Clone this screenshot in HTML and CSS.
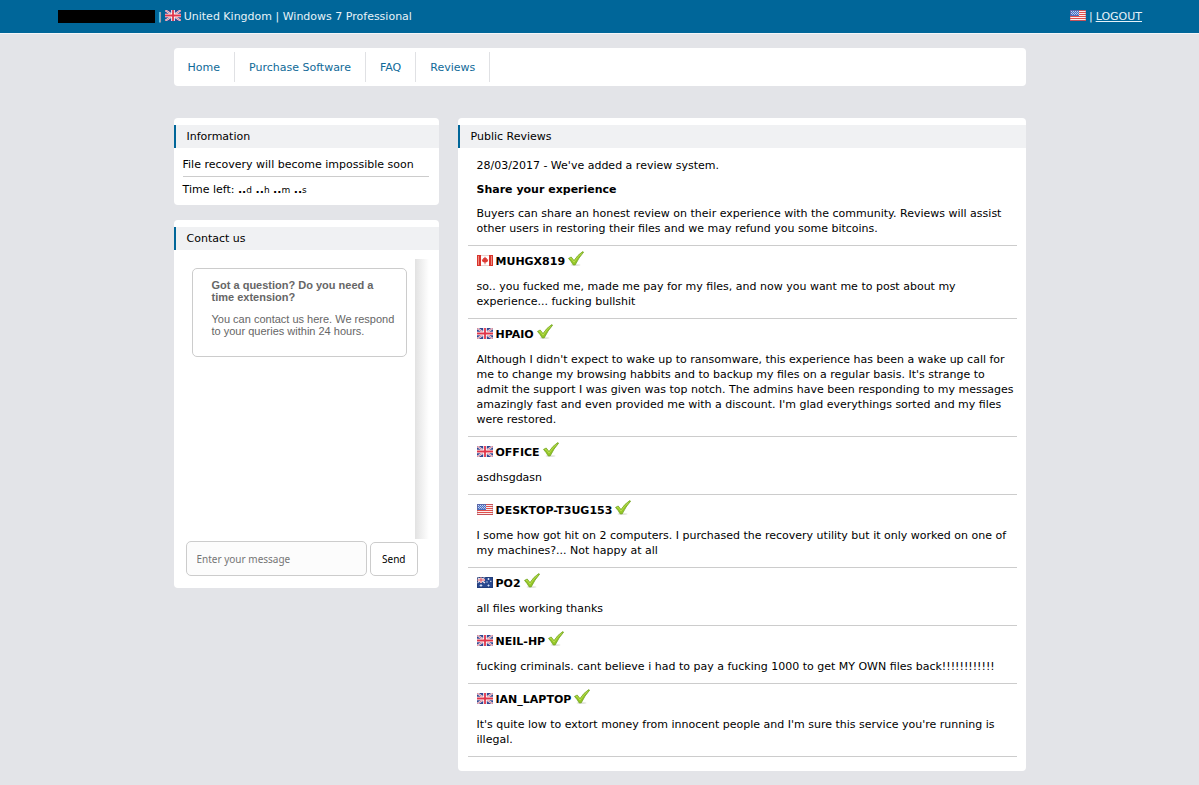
FILE: index.html
```html
<!DOCTYPE html>
<html lang="en">
<head>
<meta charset="utf-8">
<meta name="viewport" content="width=device-width, initial-scale=1">
<title>Public Reviews</title>
<link rel="stylesheet" href="styles.css">
</head>
<body>
<svg class="sprite" aria-hidden="true">
  <symbol id="flag-gb" viewBox="0 0 16 11">
    <rect width="16" height="11" fill="#34458f"/>
    <path d="M0 0L16 11M16 0L0 11" stroke="#efebf3" stroke-width="2"/>
    <path d="M0 0L16 11M16 0L0 11" stroke="#d8606e" stroke-width="0.8"/>
    <path d="M8 0V11M0 5.5H16" stroke="#fff" stroke-width="3.6"/>
    <path d="M8 0V11M0 5.5H16" stroke="#e0354a" stroke-width="1.8"/>
  </symbol>
  <symbol id="flag-us" viewBox="0 0 16 11">
    <rect width="16" height="11" fill="#fbeeee"/>
    <path d="M0 .5H16M0 2.5H16M0 4.5H16M0 6.5H16M0 8.5H16M0 10.5H16" stroke="#e0504c"/>
    <rect width="9" height="6" fill="#4a6fc0"/>
    <path d="M1 1.5H9M1 3.5H9" stroke="#c5d4f2" stroke-dasharray="1 1"/>
    <path d="M2 2.5H9M2 4.5H9" stroke="#a5bae6" stroke-dasharray="1 1"/>
    <rect x="0.5" y="0.5" width="15" height="10" fill="none" stroke="#8a5a78" stroke-opacity="0.3"/>
  </symbol>
  <symbol id="flag-ca" viewBox="0 0 16 11">
    <rect width="16" height="11" fill="#fff"/>
    <path d="M0 0H4V11H0zM12 0H16V11H12z" fill="#d8342c"/>
    <path d="M1.5 1V10M14.5 1V10" stroke="#f08a80"/>
    <path d="M8 1.5L9 3.3L10 3L9.8 4.6L11.3 4.2L10.8 5.6L11.3 6L9 7.6H8.4V9.3H7.6V7.6H7L4.7 6L5.2 5.6L4.7 4.2L6.2 4.6L6 3L7 3.3z" fill="#dc3a34"/>
    <path d="M4 .5H12M4 10.5H12" stroke="#ead4d2"/>
  </symbol>
  <symbol id="flag-au" viewBox="0 0 16 11">
    <rect width="16" height="11" fill="#29488f"/>
    <path d="M0 0L8 6M8 0L0 6" stroke="#e8e3ef" stroke-width="1.4"/>
    <path d="M4 0V6M0 3H8" stroke="#fff" stroke-width="2"/>
    <path d="M4 0V6M0 3H8" stroke="#d94a58"/>
    <path d="M4 7.2V9.8M2.7 8.5H5.3M11.5 1V3M10.5 2H12.5M9.3 5H10.7M13 4.3H14.5M11.5 7.5V9.5M10.5 8.5H12.5" stroke="#d5dff3"/>
    <rect x="0.5" y="0.5" width="15" height="10" fill="none" stroke="#1b3268" stroke-opacity="0.5"/>
  </symbol>
  <symbol id="tick" viewBox="0 0 16 16">
    <ellipse cx="7.5" cy="14" rx="5" ry="0.8" fill="#d8dcd2"/>
    <path d="M0.5 7.4L3.2 6L6 9.6Q9.5 4 14.800 0.500L15.600 1.200Q10.800 6.500 7.200 13.900H5.200Q3.300 10.400 0.500 7.400z" fill="#93c626" stroke="#76a62a" stroke-width="0.8" stroke-linejoin="round"/>
    <path d="M2 7.600L3 7.200L6 11.200Q9.500 5.600 13.500 2.300" fill="none" stroke="#bce050" stroke-width="0.9"/>
  </symbol>
</svg>

<header class="topbar">
  <div class="topbar-group">
    <span class="redacted"></span>
    <span>|</span>
    <svg class="flag" role="img" aria-label="United Kingdom"><use href="#flag-gb"/></svg>
    <span>United Kingdom | Windows 7 Professional</span>
  </div>
  <div class="topbar-group">
    <svg class="flag" role="img" aria-label="English"><use href="#flag-us"/></svg>
    <span>|</span>
    <a class="logout" href="#">LOGOUT</a>
  </div>
</header>

<div class="page">
  <nav class="nav">
    <a class="nav-link" href="#">Home</a>
    <a class="nav-link" href="#">Purchase Software</a>
    <a class="nav-link" href="#">FAQ</a>
    <a class="nav-link" href="#">Reviews</a>
  </nav>

  <div class="columns">
    <aside class="sidebar">
      <section class="panel">
        <h2 class="panel-title">Information</h2>
        <div class="info">
          <p class="info-row">File recovery will become impossible soon</p>
          <p class="info-row">Time left: <b>..</b><small>d</small> <b>..</b><small>h</small> <b>..</b><small>m</small> <b>..</b><small>s</small></p>
        </div>
      </section>

      <section class="panel">
        <h2 class="panel-title">Contact us</h2>
        <div class="chat">
          <div class="chat-log">
            <div class="chat-note">
              <p><strong>Got a question? Do you need a time extension?</strong></p>
              <p>You can contact us here. We respond to your queries within 24 hours.</p>
            </div>
          </div>
          <div class="chat-edge"></div>
        </div>
        <form class="chat-form">
          <input class="chat-input" type="text" placeholder="Enter your message" aria-label="Enter your message">
          <button class="chat-send" type="button">Send</button>
        </form>
      </section>
    </aside>

    <main class="panel reviews">
      <h2 class="panel-title">Public Reviews</h2>
      <div class="review-list">
        <div class="intro">
          <p>28/03/2017 - We've added a review system.</p>
          <p><strong>Share your experience</strong></p>
          <p>Buyers can share an honest review on their experience with the community. Reviews will assist other users in restoring their files and we may refund you some bitcoins.</p>
        </div>
        <article class="review">
          <h3 class="review-name"><svg class="flag"><use href="#flag-ca"/></svg><span>MUHGX819</span><svg class="tick"><use href="#tick"/></svg></h3>
          <p>so.. you fucked me, made me pay for my files, and now you want me to post about my experience... fucking bullshit</p>
        </article>
        <article class="review">
          <h3 class="review-name"><svg class="flag"><use href="#flag-gb"/></svg><span>HPAIO</span><svg class="tick"><use href="#tick"/></svg></h3>
          <p>Although I didn't expect to wake up to ransomware, this experience has been a wake up call for me to change my browsing habbits and to backup my files on a regular basis. It's strange to admit the support I was given was top notch. The admins have been responding to my messages amazingly fast and even provided me with a discount. I'm glad everythings sorted and my files were restored.</p>
        </article>
        <article class="review">
          <h3 class="review-name"><svg class="flag"><use href="#flag-gb"/></svg><span>OFFICE</span><svg class="tick"><use href="#tick"/></svg></h3>
          <p>asdhsgdasn</p>
        </article>
        <article class="review">
          <h3 class="review-name"><svg class="flag"><use href="#flag-us"/></svg><span>DESKTOP-T3UG153</span><svg class="tick"><use href="#tick"/></svg></h3>
          <p>I some how got hit on 2 computers. I purchased the recovery utility but it only worked on one of my machines?... Not happy at all</p>
        </article>
        <article class="review">
          <h3 class="review-name"><svg class="flag"><use href="#flag-au"/></svg><span>PO2</span><svg class="tick"><use href="#tick"/></svg></h3>
          <p>all files working thanks</p>
        </article>
        <article class="review">
          <h3 class="review-name"><svg class="flag"><use href="#flag-gb"/></svg><span>NEIL-HP</span><svg class="tick"><use href="#tick"/></svg></h3>
          <p>fucking criminals. cant believe i had to pay a fucking 1000 to get MY OWN files back!!!!!!!!!!!!</p>
        </article>
        <article class="review">
          <h3 class="review-name"><svg class="flag"><use href="#flag-gb"/></svg><span>IAN_LAPTOP</span><svg class="tick"><use href="#tick"/></svg></h3>
          <p>It's quite low to extort money from innocent people and I'm sure this service you're running is illegal.</p>
        </article>
      </div>
    </main>
  </div>
</div>
</body>
</html>
```
FILE: styles.css
```css
* {
  box-sizing: border-box;
}

body {
  margin: 0;
  background: #e3e4e8;
  color: #000;
  font: 11px/15px "DejaVu Sans", Verdana, sans-serif;
}

p,
h2,
h3 {
  margin: 0;
  font-size: inherit;
}

.sprite {
  display: none;
}

.flag {
  width: 16px;
  height: 11px;
  flex: none;
}

.tick {
  width: 16px;
  height: 16px;
  flex: none;
}

.topbar {
  display: flex;
  justify-content: space-between;
  padding: 9px 57px 9px 58px;
  background: #006699;
  border-bottom: 1px solid #f2f5f8;
  color: #e6f2f8;
}

.topbar-group {
  display: flex;
  gap: 3px;
}

.topbar-group .flag {
  margin-top: 1px;
}

.redacted {
  width: 97px;
  height: 13px;
  margin-top: 1px;
  background: #000;
}

.logout {
  color: inherit;
}

.page {
  max-width: 852px;
  margin: 0 auto;
  padding: 14px 0;
}

.nav {
  display: flex;
  padding: 4px 0;
  margin-bottom: 32px;
  background: #fff;
  border-radius: 4px;
}

.nav-link {
  padding: 8px 14px 7px;
  border-right: 1px solid #e0e1e4;
  color: #106a98;
  text-decoration: none;
}

.columns {
  display: grid;
  grid-template-columns: 265px minmax(0, 1fr);
  gap: 19px;
  align-items: start;
}

.sidebar {
  display: grid;
  gap: 15px;
}

.panel {
  padding-top: 7px;
  background: #fff;
  border-radius: 4px;
}

.panel-title {
  padding: 4px 11px;
  border-left: 2px solid #006699;
  background: #f0f1f3;
  font-weight: normal;
}

.info {
  padding: 9px 10px 3px 9px;
}

.info-row {
  padding-bottom: 4px;
}

.info-row + .info-row {
  padding-top: 5px;
  border-top: 1px solid #ccc;
}

.info-row small {
  font-size: 9px;
}

.chat {
  display: flex;
  height: 280px;
  margin: 9px 10px 0 18px;
}

.chat-log {
  flex: 1;
  padding: 9px 8px 0 0;
}

.chat-edge {
  width: 14px;
  background: linear-gradient(to right, #e2e2e2, #fff);
}

.chat-note {
  padding: 10px 8px 19px 19px;
  border: 1px solid #ccc;
  border-radius: 5px;
  color: #666;
  font: 11px/12px "Liberation Sans", Arial, sans-serif;
}

.chat-note p + p {
  margin-top: 10px;
}

.chat-form {
  display: flex;
  align-items: flex-end;
  gap: 3px;
  padding: 2px 21px 12px 12px;
}

.chat-input,
.chat-send {
  border: 1px solid #ccc;
  border-radius: 5px;
  font: 10px/15px "Noto Sans", sans-serif;
}

.chat-input {
  flex: 1;
  min-width: 0;
  height: 35px;
  padding: 0 10px;
  background: #fcfcfc;
}

.chat-input::placeholder {
  color: #757575;
}

.chat-send {
  height: 34px;
  padding: 0 11px;
  background: #fff;
  color: #000;
}

.reviews {
  padding-bottom: 14px;
}

.review-list {
  padding: 0 9px 0 10px;
}

.intro {
  display: grid;
  gap: 9px;
  padding: 10px 0 9px 9px;
  border-bottom: 1px solid #ccc;
}

.review {
  padding: 8px 0 9px 9px;
  border-bottom: 1px solid #ccc;
}

.review-name {
  display: flex;
  gap: 3px;
  height: 15px;
  margin-bottom: 10px;
}

.review-name .flag {
  margin-top: 1px;
}

.review-name .tick {
  margin-top: -3px;
}
```
